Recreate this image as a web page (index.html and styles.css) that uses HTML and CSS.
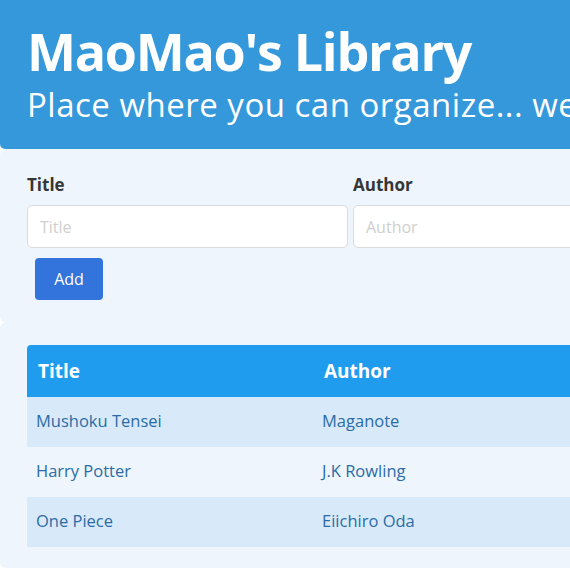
FILE: index.html
```html
<!DOCTYPE html>
<html lang="en">
<head>
<meta charset="utf-8">
<title>MaoMao's Library</title>
<link rel="stylesheet" href="styles.css">
</head>
<body>
<div class="page">
  <header class="hero">
    <h1 class="title">MaoMao's Library</h1>
    <p class="subtitle">Place where you can organize... well, your books!</p>
  </header>

  <section class="panel form-panel">
    <div class="fields">
      <div class="field">
        <label class="label" for="title">Title</label>
        <input class="input" id="title" type="text" placeholder="Title">
      </div>
      <div class="field">
        <label class="label" for="author">Author</label>
        <input class="input" id="author" type="text" placeholder="Author">
      </div>
    </div>
    <button class="button">Add</button>
  </section>

  <section class="panel table-panel">
    <table class="books">
      <thead>
        <tr><th class="col-title">Title</th><th>Author</th><th></th></tr>
      </thead>
      <tbody>
        <tr><td>Mushoku Tensei</td><td>Maganote</td><td></td></tr>
        <tr><td>Harry Potter</td><td>J.K Rowling</td><td></td></tr>
        <tr><td>One Piece</td><td>Eiichiro Oda</td><td></td></tr>
      </tbody>
    </table>
  </section>
</div>
</body>
</html>
```

FILE: styles.css
```css
html, body {
  margin: 0;
  padding: 0;
  background: #ffffff;
  overflow: hidden;
}

body {
  font-family: "Open Sans", "Noto Sans", sans-serif;
  color: #363636;
}

.page {
  width: 900px;
}

.hero {
  background: #3498db;
  color: #ffffff;
  border-radius: 0 0 5px 5px;
  padding: 23px 28px 0 27px;
  height: 126px;
}

.title {
  margin: 0;
  font-size: 52px;
  line-height: 56px;
  font-weight: 700;
  letter-spacing: -1.3px;
  white-space: nowrap;
}

.subtitle {
  margin: 0;
  padding-top: 4px;
  font-size: 33px;
  line-height: 44px;
  font-weight: 400;
  letter-spacing: 0.5px;
  white-space: nowrap;
}

.panel {
  background: #eef5fc;
  border-radius: 6px;
}

.form-panel {
  padding: 24px 27px 22px;
}

.fields {
  display: flex;
  gap: 5px;
}

.field {
  display: flex;
  flex-direction: column;
  width: 321px;
}

.label {
  font-size: 17px;
  font-weight: 700;
  line-height: 24px;
  margin-bottom: 8px;
  color: #363636;
}

.input {
  box-sizing: border-box;
  height: 43px;
  border: 1px solid #dbdbdb;
  border-radius: 5px;
  background: #ffffff;
  padding: 0 12px;
  font-family: inherit;
  font-size: 16px;
  color: #363636;
}

.input::placeholder {
  color: #cfcfcf;
}

.button {
  margin: 10px 0 0 8px;
  width: 68px;
  height: 42px;
  border: none;
  border-radius: 4px;
  background: #3273dc;
  color: #ffffff;
  font-family: inherit;
  font-size: 16px;
  cursor: pointer;
}

.table-panel {
  padding: 23px 27px 21px;
}

.books {
  width: 100%;
  border-collapse: separate;
  border-spacing: 0;
}

.books th {
  background: #209cee;
  color: #ffffff;
  font-size: 19px;
  font-weight: 700;
  text-align: left;
  height: 52px;
  padding: 0 11px;
}

.books th:first-child {
  border-top-left-radius: 4px;
}

.books th:last-child {
  border-top-right-radius: 4px;
}

.books .col-title {
  width: 264px;
}

.books td {
  height: 50px;
  box-sizing: border-box;
  padding: 0 9px 3px;
  font-size: 16.5px;
  color: #2b6ca6;
}

.books tbody tr:nth-child(odd) td {
  background: #d8eaf9;
}
```
